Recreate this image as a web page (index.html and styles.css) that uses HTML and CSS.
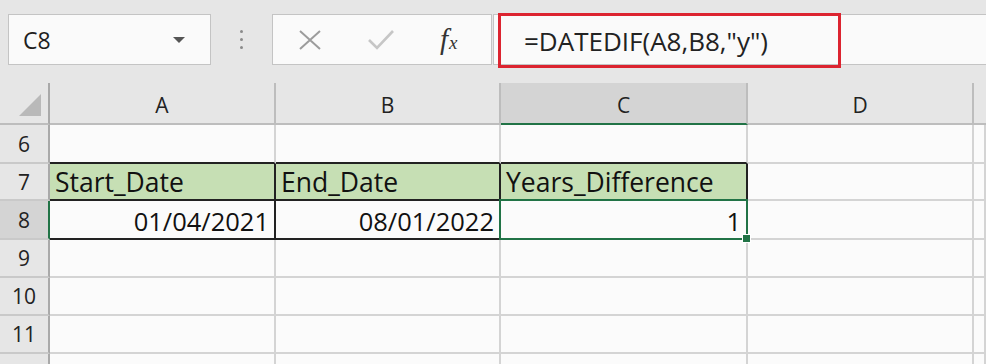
FILE: index.html
```html
<!DOCTYPE html>
<html lang="en">
<head>
    <meta charset="UTF-8">
    <title>DATEDIF</title>
    <link rel="stylesheet" href="styles.css">
</head>
<body>
    <div class="bar">
        <div class="namebox">
            <span>C8</span>
            <svg width="14" height="8" viewBox="0 0 14 8"><polygon points="1,1 13,1 7,7" fill="#555"/></svg>
        </div>
        <div class="dots"><i></i><i></i><i></i></div>
        <div class="btns">
            <svg width="24" height="20" viewBox="0 0 24 20"><path d="M2 1 L22 19 M22 1 L2 19" stroke="#9c9c9c" stroke-width="2" fill="none"/></svg>
            <svg width="26" height="20" viewBox="0 0 26 20"><path d="M1 10 L9 18 L25 1" stroke="#c6c6c6" stroke-width="2.6" fill="none"/></svg>
            <span class="fx"><i>f</i><i class="x">x</i></span>
        </div>
        <div class="input">
            <div class="mark">=DATEDIF(A8,B8,"y")</div>
        </div>
    </div>

    <div class="sheet">
        <div class="hd corner"><svg width="24" height="24" viewBox="0 0 24 24"><polygon points="23,1 23,23 1,23" fill="#b9b9b9"/></svg></div>
        <div class="hd col">A</div>
        <div class="hd col">B</div>
        <div class="hd col cur">C</div>
        <div class="hd col">D</div>
        <div class="hd col last"></div>

        <div class="hd row">6</div>
        <div class="cell top"></div>
        <div class="cell top"></div>
        <div class="cell top"></div>
        <div class="cell"></div>
        <div class="cell"></div>

        <div class="hd row">7</div>
        <div class="cell tb green">Start_Date</div>
        <div class="cell tb green">End_Date</div>
        <div class="cell tb green">Years_Difference</div>
        <div class="cell"></div>
        <div class="cell"></div>

        <div class="hd row cur">8</div>
        <div class="cell tb num">01/04/2021</div>
        <div class="cell tb num">08/01/2022</div>
        <div class="cell tb num sel">1</div>
        <div class="cell"></div>
        <div class="cell"></div>

        <div class="hd row">9</div>
        <div class="cell"></div>
        <div class="cell"></div>
        <div class="cell"></div>
        <div class="cell"></div>
        <div class="cell"></div>

        <div class="hd row">10</div>
        <div class="cell"></div>
        <div class="cell"></div>
        <div class="cell"></div>
        <div class="cell"></div>
        <div class="cell"></div>

        <div class="hd row">11</div>
        <div class="cell"></div>
        <div class="cell"></div>
        <div class="cell"></div>
        <div class="cell"></div>
        <div class="cell"></div>

        <div class="hd row"></div>
        <div class="cell"></div>
        <div class="cell"></div>
        <div class="cell"></div>
        <div class="cell"></div>
        <div class="cell"></div>
    </div>
</body>
</html>
```

FILE: styles.css
```css
* {
    margin: 0;
    padding: 0;
    box-sizing: border-box;
}

html,
body {
    height: 364px;
    overflow: hidden;
}

body {
    background: #e6e6e6;
    font-family: "Open Sans", "Noto Sans", sans-serif;
    color: #1f1f1f;
}

/* formula bar */
.bar {
    height: 83px;
    display: flex;
    align-items: flex-start;
    padding-top: 14px;
    padding-left: 8px;
}

.namebox {
    width: 203px;
    height: 51px;
    background: #fafafa;
    border: 1px solid #c4c4c4;
    display: flex;
    align-items: center;
    justify-content: space-between;
    padding: 0 24px 0 14px;
    font-size: 23px;
}

.dots {
    width: 61px;
    height: 51px;
    display: flex;
    flex-direction: column;
    align-items: center;
    justify-content: center;
    gap: 5px;
}

.dots i {
    width: 3px;
    height: 3px;
    border-radius: 50%;
    background: #8a8a8a;
}

.btns {
    width: 220px;
    height: 51px;
    background: #fafafa;
    border: 1px solid #c4c4c4;
    display: flex;
    align-items: center;
    padding-left: 25px;
    gap: 46px;
}

.fx {
    font: italic 29px "Liberation Serif", serif;
    color: #333;
    line-height: 1;
}

.fx .x {
    font-size: 19px;
    margin-left: 1px;
}

.input {
    flex: 1;
    height: 51px;
    margin-left: 1px;
    background: #fafafa;
    border: 1px solid #c4c4c4;
    border-right: none;
    display: flex;
    align-items: center;
    padding-left: 4px;
}

.mark {
    width: 343px;
    height: 55px;
    margin-top: 2px;
    border: 3px solid #dc2430;
    display: flex;
    align-items: center;
    padding-left: 23px;
    font-size: 26px;
    color: #222;
}

/* sheet */
.sheet {
    display: grid;
    grid-template-columns: 50px 226px 225px 247px 226px 1fr;
    grid-template-rows: 42px 39px 37px 39px 38px 38px 38px 12px;
    background: #fbfbfb;
}

.hd {
    background: #e6e6e6;
    color: #222;
    font-size: 21px;
    display: flex;
    align-items: center;
    justify-content: center;
}

.corner {
    align-items: flex-end;
    justify-content: flex-end;
    padding: 0 6px 6px 0;
    border-right: 2px solid #a9a9a9;
    border-bottom: 2px solid #bdbdbd;
}

.col {
    border-right: 2px solid #bdbdbd;
    border-bottom: 2px solid #bdbdbd;
    padding-top: 4px;
}

.col.last {
    border-right: none;
}

.row {
    border-right: 2px solid #a9a9a9;
    border-bottom: 2px solid #c9c9c9;
}

.hd.cur {
    background: #d4d4d4;
}

.col.cur {
    border-bottom-color: #217346;
}

.row.cur {
    border-right-color: #217346;
}

.cell {
    border-right: 2px solid #d4d4d4;
    border-bottom: 2px solid #d4d4d4;
    font-size: 26.5px;
    display: flex;
    align-items: flex-end;
    padding: 0 5px 0 5px;
    line-height: 34px;
    white-space: nowrap;
    color: #111;
}

.cell.top {
    border-bottom-color: #222;
}

.cell.tb {
    border-right-color: #222;
    border-bottom-color: #222;
}

.green {
    background: #c6dfb4;
}

.num {
    justify-content: flex-end;
    font-size: 25.5px;
}

.sel {
    position: relative;
}

.sel::before {
    content: "";
    position: absolute;
    top: -2px;
    left: -2px;
    right: -2px;
    bottom: -2px;
    border: 2px solid #217346;
}

.sel::after {
    content: "";
    position: absolute;
    right: -5px;
    bottom: -5px;
    width: 7px;
    height: 7px;
    background: #217346;
    border: 1px solid #fff;
}
```
